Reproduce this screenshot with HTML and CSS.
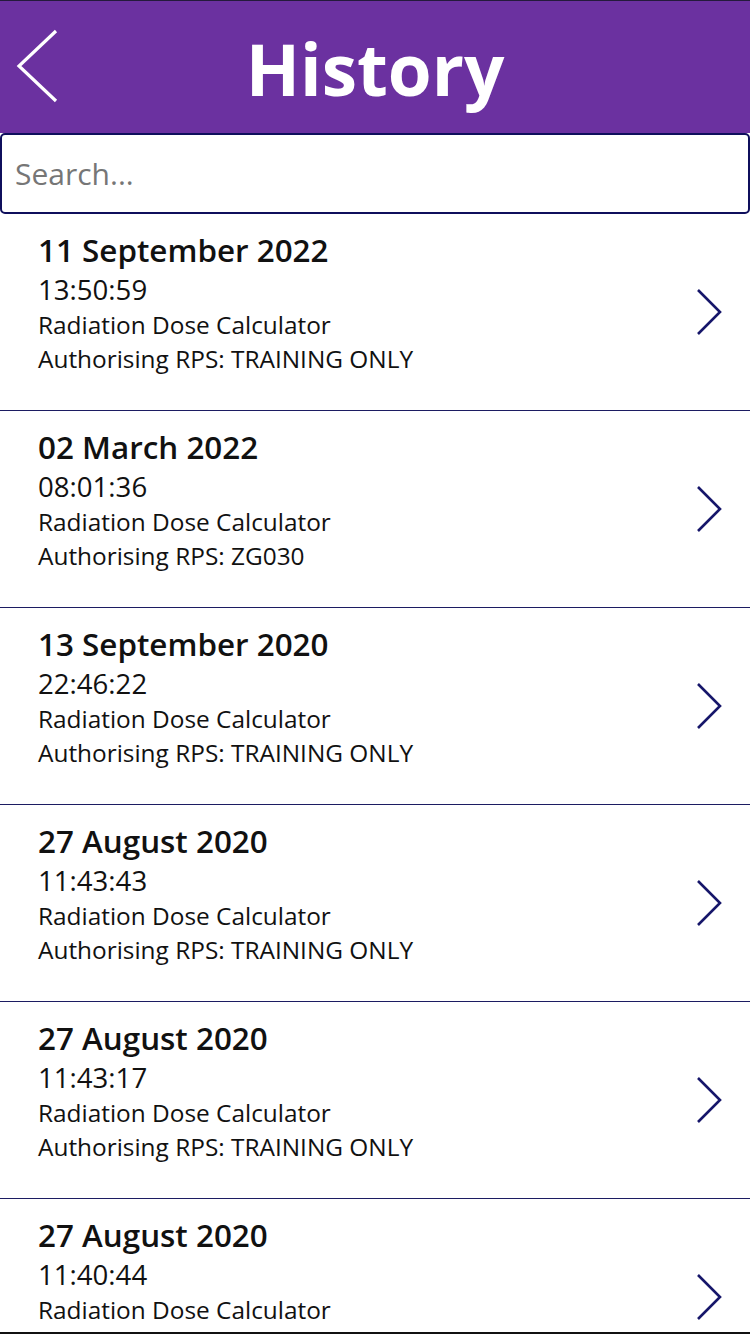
FILE: index.html
```html
<!DOCTYPE html>
<html lang="en">
<head>
<meta charset="utf-8">
<title>History</title>
<link rel="stylesheet" href="styles.css">
</head>
<body>
<div class="app">
  <header class="topbar">
    <div class="back">
      <svg width="44" height="76" viewBox="0 0 44 76"><polyline points="40,2 3,37 40,72" fill="none" stroke="#fff" stroke-width="3.2"/></svg>
    </div>
    <h1 class="title">History</h1>
    <div></div>
  </header>
  <div class="search">Search...</div>
  <ul class="list">
    <li class="row">
      <div class="info">
        <div class="date">11 September 2022</div>
        <div class="time">13:50:59</div>
        <div class="line">Radiation Dose Calculator</div>
        <div class="line auth">Authorising RPS: TRAINING ONLY</div>
      </div>
      <svg class="chev" width="30" height="48" viewBox="0 0 30 48"><polyline points="3,2 25,24 3,46" fill="none" stroke="#16166a" stroke-width="2.6"/></svg>
    </li>
    <li class="row">
      <div class="info">
        <div class="date">02 March 2022</div>
        <div class="time">08:01:36</div>
        <div class="line">Radiation Dose Calculator</div>
        <div class="line auth">Authorising RPS: ZG030</div>
      </div>
      <svg class="chev" width="30" height="48" viewBox="0 0 30 48"><polyline points="3,2 25,24 3,46" fill="none" stroke="#16166a" stroke-width="2.6"/></svg>
    </li>
    <li class="row">
      <div class="info">
        <div class="date">13 September 2020</div>
        <div class="time">22:46:22</div>
        <div class="line">Radiation Dose Calculator</div>
        <div class="line auth">Authorising RPS: TRAINING ONLY</div>
      </div>
      <svg class="chev" width="30" height="48" viewBox="0 0 30 48"><polyline points="3,2 25,24 3,46" fill="none" stroke="#16166a" stroke-width="2.6"/></svg>
    </li>
    <li class="row">
      <div class="info">
        <div class="date">27 August 2020</div>
        <div class="time">11:43:43</div>
        <div class="line">Radiation Dose Calculator</div>
        <div class="line auth">Authorising RPS: TRAINING ONLY</div>
      </div>
      <svg class="chev" width="30" height="48" viewBox="0 0 30 48"><polyline points="3,2 25,24 3,46" fill="none" stroke="#16166a" stroke-width="2.6"/></svg>
    </li>
    <li class="row">
      <div class="info">
        <div class="date">27 August 2020</div>
        <div class="time">11:43:17</div>
        <div class="line">Radiation Dose Calculator</div>
        <div class="line auth">Authorising RPS: TRAINING ONLY</div>
      </div>
      <svg class="chev" width="30" height="48" viewBox="0 0 30 48"><polyline points="3,2 25,24 3,46" fill="none" stroke="#16166a" stroke-width="2.6"/></svg>
    </li>
    <li class="row">
      <div class="info">
        <div class="date">27 August 2020</div>
        <div class="time">11:40:44</div>
        <div class="line">Radiation Dose Calculator</div>
        <div class="line auth">Authorising RPS: TRAINING ONLY</div>
      </div>
      <svg class="chev" width="30" height="48" viewBox="0 0 30 48"><polyline points="3,2 25,24 3,46" fill="none" stroke="#16166a" stroke-width="2.6"/></svg>
    </li>
  </ul>
</div>
</body>
</html>
```
FILE: styles.css
```css
* { box-sizing: border-box; }
html, body { margin: 0; padding: 0; background: #fff; }
body { font-family: "Open Sans", "Noto Sans", sans-serif; color: #111; }

.app {
  width: 750px;
  height: 1334px;
  overflow: hidden;
  border-top: 1px solid #241a3c;
  border-bottom: 2px solid #111;
  display: flex;
  flex-direction: column;
}

.topbar {
  height: 132px;
  flex: none;
  background: #6b31a0;
  display: grid;
  grid-template-columns: 1fr auto 1fr;
  align-items: center;
}
.back { justify-self: start; margin-left: 16px; display: flex; }
.title {
  margin: 0;
  color: #fff;
  font-size: 71px;
  font-weight: 700;
  line-height: 1;
  letter-spacing: 0;
  padding-top: 2px;
}

.search {
  height: 81px;
  flex: none;
  border: 2px solid #0f0f5c;
  border-radius: 5px;
  padding-left: 13px;
  display: flex;
  align-items: center;
  font-size: 30px;
  color: #767676;
}

.list { list-style: none; margin: 0; padding: 0; }
.row {
  height: 197px;
  border-bottom: 1px solid #1c1c62;
  display: flex;
  align-items: center;
  padding-left: 38px;
  padding-right: 25px;
}
.info { flex: 1; padding-bottom: 19px; }
.date { font-size: 31.4px; font-weight: 600; line-height: 41px; }
.time { font-size: 27.6px; line-height: 38px; }
.line { font-size: 24.4px; line-height: 33px; }
.line.auth { line-height: 35px; }
.chev { flex: none; }
```
